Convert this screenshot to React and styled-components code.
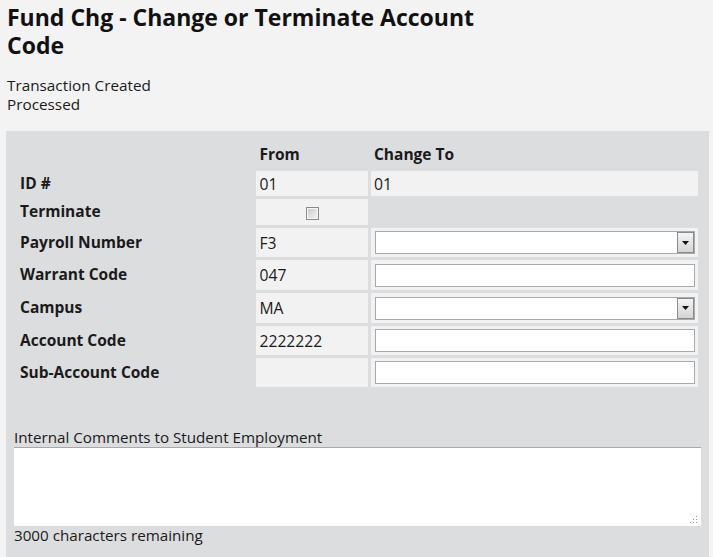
import React from 'react'
import styled, { createGlobalStyle } from 'styled-components'

const Global = createGlobalStyle`
  html, body {
    margin: 0;
    padding: 0;
    background: #f3f3f3;
    font-family: "Open Sans", "DejaVu Sans", sans-serif;
    color: #1a1a1a;
  }
`

const Page = styled.div`
  padding: 3px 4px 0 6px;
`

const Title = styled.h1`
  margin: 0 0 0 1px;
  max-width: 500px;
  font-size: 23px;
  line-height: 28px;
  font-weight: 700;
  color: #111;
`

const Status = styled.div`
  margin: 17px 0 0 1px;
  font-size: 15.3px;
  line-height: 19px;
`

const Panel = styled.div`
  margin-top: 17px;
  background: #dcdddf;
  padding: 11px 8px 12px 8px;
  min-height: 400px;
`

const Table = styled.table`
  border-spacing: 3px;
  border-collapse: separate;
  margin-left: -2px;
  table-layout: fixed;
`

const HeadCell = styled.th`
  text-align: left;
  vertical-align: top;
  font-size: 15.5px;
  line-height: 19px;
  font-weight: 700;
  padding: 0 3px;
  height: 23px;
  box-sizing: border-box;
`

const Label = styled.td`
  font-size: 15.5px;
  font-weight: 700;
  padding: 0 3px 2px 5px;
  vertical-align: middle;
`

const Cell = styled.td`
  background: ${p => (p.$bare ? 'transparent' : '#f2f2f2')};
  font-size: 15.7px;
  padding: 0 3px;
  height: ${p => p.$h || 29}px;
  text-align: ${p => (p.$center ? 'center' : 'left')};
  vertical-align: middle;
`

const TextBox = styled.div`
  box-sizing: border-box;
  width: 320px;
  height: 23px;
  margin-left: 1px;
  background: #fff;
  border: 1px solid #a9a9a9;
  position: relative;
`

const Arrow = styled.span`
  position: absolute;
  right: 0;
  top: 0;
  width: 17px;
  height: 21px;
  box-sizing: border-box;
  border: 1px solid #8a8a8a;
  background: linear-gradient(#f4f4f4, #d4d4d4);
  display: flex;
  align-items: center;
  justify-content: center;
`

const Check = styled.span`
  display: inline-block;
  width: 13px;
  height: 13px;
  box-sizing: border-box;
  border: 1px solid #8a8a8a;
  box-shadow: inset 0 0 0 1px #f6f6f6;
  background: linear-gradient(135deg, #c8c8c8, #f8f8f8);
  vertical-align: middle;
`

const Comments = styled.div`
  margin-top: 38px;
`

const CommentLabel = styled.div`
  font-size: 15.2px;
  line-height: 19px;
`

const Area = styled.div`
  box-sizing: border-box;
  width: 687px;
  height: 79px;
  background: #fff;
  border-top: 1px solid #a8a8a8;
  position: relative;
`

const Grip = styled.svg`
  position: absolute;
  right: 3px;
  bottom: 2px;
`

const Remaining = styled.div`
  font-size: 15.2px;
  line-height: 19px;
`

function Dropdown() {
  return (
    <TextBox>
      <Arrow>
        <svg width="7" height="4" viewBox="0 0 7 4">
          <path d="M0 0h7L3.5 4z" fill="#111" />
        </svg>
      </Arrow>
    </TextBox>
  )
}

const rows = [
  { label: 'Payroll Number', from: 'F3', to: 'select' },
  { label: 'Warrant Code', from: '047', to: 'text', h: 30 },
  { label: 'Campus', from: 'MA', to: 'select', h: 30 },
  { label: 'Account Code', from: '2222222', to: 'text' },
  { label: 'Sub-Account Code', from: '', to: 'text' },
]

export default function App() {
  return (
    <>
      <Global />
      <Page>
        <Title>Fund Chg - Change or Terminate Account Code</Title>
        <Status>
          Transaction Created
          <br />
          Processed
        </Status>
        <Panel>
          <Table>
            <colgroup>
              <col style={{ width: 240 }} />
              <col style={{ width: 112 }} />
              <col style={{ width: 325 }} />
            </colgroup>
            <thead>
              <tr>
                <HeadCell />
                <HeadCell>From</HeadCell>
                <HeadCell>Change To</HeadCell>
              </tr>
            </thead>
            <tbody>
              <tr>
                <Label>ID #</Label>
                <Cell $h={25}>01</Cell>
                <Cell $h={25}>01</Cell>
              </tr>
              <tr>
                <Label>Terminate</Label>
                <Cell $h={26} $center>
                  <Check />
                </Cell>
                <Cell $bare $h={26} />
              </tr>
              {rows.map(r => (
                <tr key={r.label}>
                  <Label>{r.label}</Label>
                  <Cell $h={r.h}>{r.from}</Cell>
                  <Cell $h={r.h}>{r.to === 'select' ? <Dropdown /> : <TextBox />}</Cell>
                </tr>
              ))}
            </tbody>
          </Table>
          <Comments>
            <CommentLabel>Internal Comments to Student Employment</CommentLabel>
            <Area>
              <Grip width="8" height="8" viewBox="0 0 8 8">
                <g fill="#9a9a9a">
                  <rect x="6" y="0" width="1" height="1" />
                  <rect x="3" y="3" width="1" height="1" />
                  <rect x="6" y="3" width="1" height="1" />
                  <rect x="0" y="6" width="1" height="1" />
                  <rect x="3" y="6" width="1" height="1" />
                  <rect x="6" y="6" width="1" height="1" />
                </g>
              </Grip>
            </Area>
            <Remaining>3000 characters remaining</Remaining>
          </Comments>
        </Panel>
      </Page>
    </>
  )
}
